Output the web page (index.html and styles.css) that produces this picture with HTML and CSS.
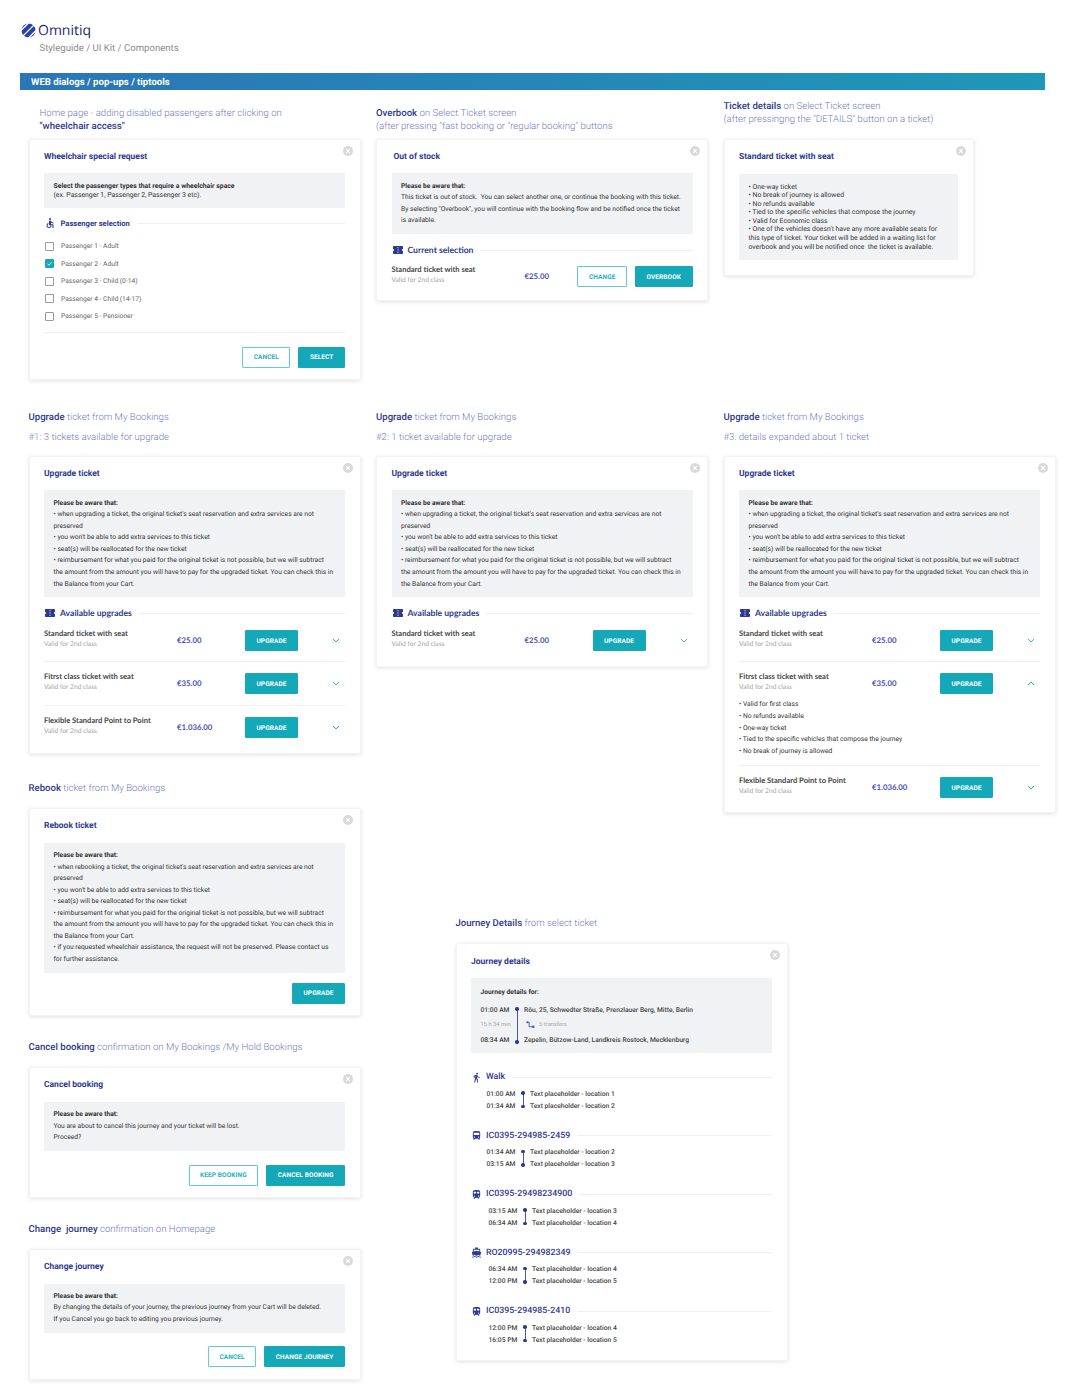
FILE: index.html
```html
<!DOCTYPE html>
<html lang="en">
<head>
    <meta charset="UTF-8">
    <meta name="viewport" content="width=device-width, initial-scale=1.0">
    <title>Omnitiq - Styleguide</title>
    <link rel="stylesheet" href="styles.css">
</head>
<body>
    <svg class="sprite" aria-hidden="true">
        <symbol id="i-close" viewBox="0 0 10 10"><circle cx="5" cy="5" r="5" fill="#d9d9d9"/><path d="M3.2 3.2l3.6 3.6M6.8 3.2L3.2 6.8" stroke="#fff" stroke-width="1.1"/></symbol>
        <symbol id="i-ticket" viewBox="2 4 20 16"><path d="M22 10V6c0-1.11-.9-2-2-2H4c-1.1 0-1.99.89-1.99 2v4c1.1 0 1.99.9 1.99 2s-.89 2-2 2v4c0 1.1.9 2 2 2h16c1.1 0 2-.9 2-2v-4c-1.1 0-2-.9-2-2s.9-2 2-2zm-9 7.5h-2v-2h2v2zm0-4.5h-2v-2h2v2zm0-4.5h-2v-2h2v2z"/></symbol>
        <symbol id="i-wheelchair" viewBox="0 0 24 24"><path d="M12 2a2 2 0 1 0 0 4 2 2 0 0 0 0-4zM19 13v-2c-1.54.02-3.09-.75-4.07-1.83l-1.29-1.43c-.17-.19-.38-.34-.61-.45-.01 0-.01-.01-.02-.01H13c-.35-.2-.75-.3-1.19-.26C10.76 7.11 10 8.04 10 9.09V15c0 1.1.9 2 2 2h5v5h2v-5.5c0-1.1-.9-2-2-2h-3v-3.45c1.29 1.07 3.25 1.94 5 1.95zm-6.17 5c-.41 1.16-1.52 2-2.83 2-1.66 0-3-1.34-3-3 0-1.31.84-2.41 2-2.83V12.1c-2.28.46-4 2.48-4 4.9 0 2.76 2.24 5 5 5 2.42 0 4.44-1.72 4.9-4h-2.07z"/></symbol>
        <symbol id="i-walk" viewBox="0 0 24 24"><path d="M13.5 5.5c1.1 0 2-.9 2-2s-.9-2-2-2-2 .9-2 2 .9 2 2 2zM9.8 8.9L7 23h2.1l1.8-8 2.1 2v6h2v-7.5l-2.1-2 .6-3C14.8 12 16.8 13 19 13v-2c-1.9 0-3.5-1-4.3-2.4l-1-1.6c-.4-.6-1-1-1.7-1-.3 0-.5.1-.8.1L6 8.3V13h2V9.6l1.8-.7"/></symbol>
        <symbol id="i-bus" viewBox="0 0 24 24"><path d="M4 16c0 .88.39 1.67 1 2.22V20c0 .55.45 1 1 1h1c.55 0 1-.45 1-1v-1h8v1c0 .55.45 1 1 1h1c.55 0 1-.45 1-1v-1.78c.61-.55 1-1.34 1-2.22V6c0-3.5-3.58-4-8-4s-8 .5-8 4v10zm3.5 1c-.83 0-1.5-.67-1.5-1.5S6.67 14 7.5 14s1.5.67 1.5 1.5S8.33 17 7.5 17zm9 0c-.83 0-1.5-.67-1.5-1.5s.67-1.5 1.5-1.5 1.5.67 1.5 1.5-.67 1.5-1.5 1.5zm1.5-6H6V6h12v5z"/></symbol>
        <symbol id="i-train" viewBox="0 0 24 24"><path d="M12 2c-4 0-8 .5-8 4v9.5C4 17.43 5.57 19 7.5 19L6 20.5v.5h2.23l2-2H14l2 2h2v-.5L16.5 19c1.93 0 3.5-1.57 3.5-3.5V6c0-3.5-3.58-4-8-4zM7.5 17c-.83 0-1.5-.67-1.5-1.5S6.67 14 7.5 14s1.5.67 1.5 1.5S8.33 17 7.5 17zm3.5-7H6V6h5v4zm2 0V6h5v4h-5zm3.5 7c-.83 0-1.5-.67-1.5-1.5s.67-1.5 1.5-1.5 1.5.67 1.5 1.5-.67 1.5-1.5 1.5z"/></symbol>
        <symbol id="i-ferry" viewBox="0 0 24 24"><path d="M20 21c-1.39 0-2.78-.47-4-1.32-2.44 1.71-5.56 1.71-8 0C6.78 20.53 5.39 21 4 21H2v2h2c1.38 0 2.74-.35 4-.99 2.52 1.29 5.48 1.29 8 0 1.26.65 2.62.99 4 .99h2v-2h-2zM3.95 19H4c1.6 0 3.02-.88 4-2 .98 1.12 2.4 2 4 2s3.02-.88 4-2c.98 1.12 2.4 2 4 2h.05l1.89-6.68c.08-.26.06-.54-.06-.78s-.34-.42-.6-.5L20 10.62V6c0-1.1-.9-2-2-2h-3V1H9v3H6c-1.1 0-2 .9-2 2v4.62l-1.29.42c-.26.08-.48.26-.6.5s-.15.52-.06.78L3.95 19zM6 6h12v3.97L12 8 6 9.97V6z"/></symbol>
        <symbol id="i-chevron" viewBox="0 0 8 5"><path d="M1 1l3 3 3-3" fill="none" stroke="#2fb6c4" stroke-width="1"/></symbol>
    </svg>

    <header class="page-head">
        <div class="logo">
            <svg class="logo-mark" viewBox="0 0 16 16">
                <circle cx="8" cy="8" r="7.5" fill="#2a3fb0"/>
                <path d="M-1 9L9-1M2 14L14 2M7 17L17 7" stroke="#fff" stroke-width="1.5"/>
            </svg>
            <span class="logo-name">Omnitiq</span>
        </div>
        <p class="crumbs">Styleguide / UI Kit / Components</p>
    </header>

    <div class="band">WEB dialogs / pop-ups / tiptools</div>

    <main class="board">
        <!-- first row -->
        <section class="board-col">
            <h2 class="label label-indent">Home page - adding disabled passengers after clicking on<br><b>"wheelchair access"</b></h2>
            <div class="dialog">
                <svg class="close"><use href="#i-close"/></svg>
                <h3 class="dialog-title">Wheelchair special request</h3>
                <div class="notice notice-tight">
                    <b>Select the passenger types that require a wheelchair space</b><br>
                    (ex. Passenger 1, Passenger 2, Passenger 3 etc).
                </div>
                <div class="sect-head">
                    <svg class="sect-icon"><use href="#i-wheelchair"/></svg>
                    <span>Passenger selection</span>
                </div>
                <ul class="pax-list">
                    <li><span class="check"></span>Passenger 1 - Adult</li>
                    <li><span class="check is-on"><svg viewBox="0 0 10 10"><path d="M2 5.2l2.2 2.2L8 3" fill="none" stroke="#fff" stroke-width="1.1"/></svg></span>Passenger 2 - Adult</li>
                    <li><span class="check"></span>Passenger 3 - Child (0-14)</li>
                    <li><span class="check"></span>Passenger 4 - Child (14-17)</li>
                    <li><span class="check"></span>Passenger 5 - Pensioner</li>
                </ul>
                <div class="actions actions-ruled">
                    <button class="btn btn-line">CANCEL</button>
                    <button class="btn">SELECT</button>
                </div>
            </div>
        </section>

        <section class="board-col">
            <h2 class="label"><b>Overbook</b> on Select Ticket screen<br>(after pressing "fast booking or "regular booking" buttons</h2>
            <div class="dialog">
                <svg class="close"><use href="#i-close"/></svg>
                <h3 class="dialog-title title-shift">Out of stock</h3>
                <div class="notice">
                    <b>Please be aware that:</b><br>
                    This ticket is out of stock.&nbsp; You can select another one, or continue the booking with this ticket.<br>
                    By selecting "Overbook", you will continue with the booking flow and be notified once the ticket<br>
                    is available.
                </div>
                <div class="sect-head sect-head-lg">
                    <svg class="sect-icon ticket"><use href="#i-ticket"/></svg>
                    <span>Current selection</span>
                </div>
                <div class="ticket-row ticket-only">
                    <div class="ticket-main">
                        <div class="ticket-info">
                            <div class="ticket-name">Standard ticket with seat</div>
                            <div class="ticket-sub">Valid for 2nd class</div>
                        </div>
                        <div class="ticket-price">€25.00</div>
                        <div class="ticket-btns">
                            <button class="btn btn-line">CHANGE</button>
                            <button class="btn">OVERBOOK</button>
                        </div>
                    </div>
                </div>
            </div>
        </section>

        <section class="board-col">
            <h2 class="label label-high"><b>Ticket details</b> on Select Ticket screen<br>(after pressingng the "DETAILS" button on a ticket)</h2>
            <div class="dialog dialog-small">
                <svg class="close"><use href="#i-close"/></svg>
                <h3 class="dialog-title">Standard ticket with seat</h3>
                <div class="notice notice-tight">
                    • One-way ticket<br>
                    • No break of journey is allowed<br>
                    • No refunds available<br>
                    • Tied to the specific vehicles that compose the journey<br>
                    • Valid for Economic class<br>
                    • One of the vehicles doesn't have any more available seats for<br>
                    this type of ticket. Your ticket will be added in a waiting list for<br>
                    overbook and you will be notified once&nbsp; the ticket is available.
                </div>
            </div>
        </section>

        <!-- second row -->
        <section class="board-col">
            <h2 class="label label-double"><b>Upgrade</b> ticket from My Bookings<br>#1: 3 tickets available for upgrade</h2>
            <div class="dialog">
                <svg class="close"><use href="#i-close"/></svg>
                <h3 class="dialog-title">Upgrade ticket</h3>
                <div class="notice">
                    <b>Please be aware that:</b><br>
                    • when upgrading a ticket, the original ticket's seat reservation and extra services are not<br>
                    preserved<br>
                    • you won't be able to add extra services to this ticket<br>
                    • seat(s) will be reallocated for the new ticket<br>
                    • reimbursement for what you paid for the original ticket is not possible, but we will subtract<br>
                    the amount from the amount you will have to pay for the upgraded ticket. You can check this in<br>
                    the Balance from your Cart.
                </div>
                <div class="sect-head sect-head-lg">
                    <svg class="sect-icon ticket"><use href="#i-ticket"/></svg>
                    <span>Available upgrades</span>
                </div>
                <div class="ticket-row">
                    <div class="ticket-main">
                        <div class="ticket-info">
                            <div class="ticket-name">Standard ticket with seat</div>
                            <div class="ticket-sub">Valid for 2nd class</div>
                        </div>
                        <div class="ticket-price">€25.00</div>
                        <button class="btn btn-upgrade">UPGRADE</button>
                        <svg class="chevron"><use href="#i-chevron"/></svg>
                    </div>
                </div>
                <div class="ticket-row">
                    <div class="ticket-main">
                        <div class="ticket-info">
                            <div class="ticket-name">Fitrst class ticket with seat</div>
                            <div class="ticket-sub">Valid for 2nd class</div>
                        </div>
                        <div class="ticket-price">€35.00</div>
                        <button class="btn btn-upgrade">UPGRADE</button>
                        <svg class="chevron"><use href="#i-chevron"/></svg>
                    </div>
                </div>
                <div class="ticket-row">
                    <div class="ticket-main">
                        <div class="ticket-info">
                            <div class="ticket-name">Flexible Standard Point to Point</div>
                            <div class="ticket-sub">Valid for 2nd class</div>
                        </div>
                        <div class="ticket-price">€1.036.00</div>
                        <button class="btn btn-upgrade">UPGRADE</button>
                        <svg class="chevron"><use href="#i-chevron"/></svg>
                    </div>
                </div>
            </div>

            <h2 class="label label-next label-rebook"><b>Rebook</b> ticket from My Bookings</h2>
            <div class="dialog">
                <svg class="close"><use href="#i-close"/></svg>
                <h3 class="dialog-title">Rebook ticket</h3>
                <div class="notice">
                    <b>Please be aware that:</b><br>
                    • when rebooking a ticket, the original ticket's seat reservation and extra services are not<br>
                    preserved<br>
                    • you won't be able to add extra services to this ticket<br>
                    • seat(s) will be reallocated for the new ticket<br>
                    • reimbursement for what you paid for the original ticket is not possible, but we will subtract<br>
                    the amount from the amount you will have to pay for the upgraded ticket. You can check this in<br>
                    the Balance from your Cart.<br>
                    • if you requested wheelchair assistance, the request will not be preserved. Please contact us<br>
                    for further assistance.
                </div>
                <div class="actions actions-near">
                    <button class="btn btn-upgrade">UPGRADE</button>
                </div>
            </div>

            <h2 class="label label-next"><b>Cancel booking</b> confirmation on My Bookings /My Hold Bookings</h2>
            <div class="dialog">
                <svg class="close"><use href="#i-close"/></svg>
                <h3 class="dialog-title">Cancel booking</h3>
                <div class="notice">
                    <b>Please be aware that:</b><br>
                    You are about to cancel this journey and your ticket will be lost.<br>
                    Proceed?
                </div>
                <div class="actions">
                    <button class="btn btn-line">KEEP BOOKING</button>
                    <button class="btn">CANCEL BOOKING</button>
                </div>
            </div>

            <h2 class="label label-next"><b>Change&nbsp; journey</b> confirmation on Homepage</h2>
            <div class="dialog">
                <svg class="close"><use href="#i-close"/></svg>
                <h3 class="dialog-title">Change journey</h3>
                <div class="notice">
                    <b>Please be aware that:</b><br>
                    By changing the details of your journey, the previous journey from your Cart will be deleted.<br>
                    If you Cancel you go back to editing you previous journey.
                </div>
                <div class="actions">
                    <button class="btn btn-line">CANCEL</button>
                    <button class="btn">CHANGE JOURNEY</button>
                </div>
            </div>
        </section>

        <section class="board-col">
            <h2 class="label label-double"><b>Upgrade</b> ticket from My Bookings<br>#2: 1 ticket available for upgrade</h2>
            <div class="dialog">
                <svg class="close"><use href="#i-close"/></svg>
                <h3 class="dialog-title">Upgrade ticket</h3>
                <div class="notice">
                    <b>Please be aware that:</b><br>
                    • when upgrading a ticket, the original ticket's seat reservation and extra services are not<br>
                    preserved<br>
                    • you won't be able to add extra services to this ticket<br>
                    • seat(s) will be reallocated for the new ticket<br>
                    • reimbursement for what you paid for the original ticket is not possible, but we will subtract<br>
                    the amount from the amount you will have to pay for the upgraded ticket. You can check this in<br>
                    the Balance from your Cart.
                </div>
                <div class="sect-head sect-head-lg">
                    <svg class="sect-icon ticket"><use href="#i-ticket"/></svg>
                    <span>Available upgrades</span>
                </div>
                <div class="ticket-row">
                    <div class="ticket-main">
                        <div class="ticket-info">
                            <div class="ticket-name">Standard ticket with seat</div>
                            <div class="ticket-sub">Valid for 2nd class</div>
                        </div>
                        <div class="ticket-price">€25.00</div>
                        <button class="btn btn-upgrade">UPGRADE</button>
                        <svg class="chevron"><use href="#i-chevron"/></svg>
                    </div>
                </div>
            </div>

            <div class="journey-wrap">
                <h2 class="label"><b>Journey Details</b> from select ticket</h2>
                <div class="dialog dialog-journey">
                    <svg class="close"><use href="#i-close"/></svg>
                    <h3 class="dialog-title">Journey details</h3>
                    <div class="notice journey-box">
                        <b>Journey details for:</b>
                        <div class="route route-summary">
                            <span class="time">01:00 AM</span>
                            <span class="rail"></span>
                            <span class="place">Röu, 25, Schwedter Straße, Prenzlauer Berg, Mitte, Berlin</span>
                            <span class="time time-muted">15 h 34 min</span>
                            <span class="place place-muted">
                                <svg class="transfer" viewBox="0 0 10 10"><path d="M1 2.5h2.5v5H8" fill="none" stroke="#4a55b8" stroke-width="1"/><circle cx="1.5" cy="2.5" r="1.2" fill="#4a55b8"/><circle cx="8" cy="7.5" r="1.4" fill="#4a55b8"/></svg>
                                5 transfers
                            </span>
                            <span class="time">08:34 AM</span>
                            <span class="place">Zepelin, Bützow-Land, Landkreis Rostock, Mecklenburg</span>
                        </div>
                    </div>

                    <div class="leg">
                        <div class="sect-head leg-head">
                            <svg class="sect-icon"><use href="#i-walk"/></svg>
                            <span>Walk</span>
                        </div>
                        <div class="route">
                            <span class="time">01:00 AM</span>
                            <span class="rail"></span>
                            <span class="place">Text placeholder - location 1</span>
                            <span class="time">01:34 AM</span>
                            <span class="place">Text placeholder - location 2</span>
                        </div>
                    </div>
                    <div class="leg">
                        <div class="sect-head leg-head">
                            <svg class="sect-icon"><use href="#i-bus"/></svg>
                            <span>IC0395-294985-2459</span>
                        </div>
                        <div class="route">
                            <span class="time">01:34 AM</span>
                            <span class="rail"></span>
                            <span class="place">Text placeholder - location 2</span>
                            <span class="time">03:15 AM</span>
                            <span class="place">Text placeholder - location 3</span>
                        </div>
                    </div>
                    <div class="leg">
                        <div class="sect-head leg-head">
                            <svg class="sect-icon"><use href="#i-train"/></svg>
                            <span>IC0395-29498234900</span>
                        </div>
                        <div class="route route-shift">
                            <span class="time">03:15 AM</span>
                            <span class="rail"></span>
                            <span class="place">Text placeholder - location 3</span>
                            <span class="time">06:34 AM</span>
                            <span class="place">Text placeholder - location 4</span>
                        </div>
                    </div>
                    <div class="leg">
                        <div class="sect-head leg-head">
                            <svg class="sect-icon"><use href="#i-ferry"/></svg>
                            <span>RO20995-294982349</span>
                        </div>
                        <div class="route route-shift">
                            <span class="time">06:34 AM</span>
                            <span class="rail"></span>
                            <span class="place">Text placeholder - location 4</span>
                            <span class="time">12:00 PM</span>
                            <span class="place">Text placeholder - location 5</span>
                        </div>
                    </div>
                    <div class="leg">
                        <div class="sect-head leg-head">
                            <svg class="sect-icon"><use href="#i-train"/></svg>
                            <span>IC0395-294985-2410</span>
                        </div>
                        <div class="route route-shift">
                            <span class="time">12:00 PM</span>
                            <span class="rail"></span>
                            <span class="place">Text placeholder - location 4</span>
                            <span class="time">16:05 PM</span>
                            <span class="place">Text placeholder - location 5</span>
                        </div>
                    </div>
                </div>
            </div>
        </section>

        <section class="board-col">
            <h2 class="label label-double"><b>Upgrade</b> ticket from My Bookings<br>#3: details expanded about 1 ticket</h2>
            <div class="dialog">
                <svg class="close"><use href="#i-close"/></svg>
                <h3 class="dialog-title">Upgrade ticket</h3>
                <div class="notice">
                    <b>Please be aware that:</b><br>
                    • when upgrading a ticket, the original ticket's seat reservation and extra services are not<br>
                    preserved<br>
                    • you won't be able to add extra services to this ticket<br>
                    • seat(s) will be reallocated for the new ticket<br>
                    • reimbursement for what you paid for the original ticket is not possible, but we will subtract<br>
                    the amount from the amount you will have to pay for the upgraded ticket. You can check this in<br>
                    the Balance from your Cart.
                </div>
                <div class="sect-head sect-head-lg">
                    <svg class="sect-icon ticket"><use href="#i-ticket"/></svg>
                    <span>Available upgrades</span>
                </div>
                <div class="ticket-row">
                    <div class="ticket-main">
                        <div class="ticket-info">
                            <div class="ticket-name">Standard ticket with seat</div>
                            <div class="ticket-sub">Valid for 2nd class</div>
                        </div>
                        <div class="ticket-price">€25.00</div>
                        <button class="btn btn-upgrade">UPGRADE</button>
                        <svg class="chevron"><use href="#i-chevron"/></svg>
                    </div>
                </div>
                <div class="ticket-row is-open">
                    <div class="ticket-main">
                        <div class="ticket-info">
                            <div class="ticket-name">Fitrst class ticket with seat</div>
                            <div class="ticket-sub">Valid for 2nd class</div>
                        </div>
                        <div class="ticket-price">€35.00</div>
                        <button class="btn btn-upgrade">UPGRADE</button>
                        <svg class="chevron chevron-up"><use href="#i-chevron"/></svg>
                    </div>
                    <div class="ticket-details">
                        • Valid for first class<br>
                        • No refunds available<br>
                        • One-way ticket<br>
                        • Tied to the specific vehicles that compose the journey<br>
                        • No break of journey is allowed
                    </div>
                </div>
                <div class="ticket-row">
                    <div class="ticket-main">
                        <div class="ticket-info">
                            <div class="ticket-name">Flexible Standard Point to Point</div>
                            <div class="ticket-sub">Valid for 2nd class</div>
                        </div>
                        <div class="ticket-price">€1.036.00</div>
                        <button class="btn btn-upgrade">UPGRADE</button>
                        <svg class="chevron"><use href="#i-chevron"/></svg>
                    </div>
                </div>
            </div>
        </section>
    </main>
</body>
</html>
```

FILE: styles.css
```css
:root {
    --navy: #2e3a8f;
    --label: #727cc2;
    --price: #4a55b8;
    --teal: #14a8b8;
    --teal-line: #62cbd7;
    --grey-box: #f1f2f4;
    --rule: #efefef;
    --text: #333;
    --muted: #a5a5a5;
}

* {
    box-sizing: border-box;
    margin: 0;
    padding: 0;
}

body {
    background: white;
    color: var(--text);
    font-family: Roboto, "Liberation Sans", sans-serif;
    font-size: 6.7px;
    text-rendering: geometricPrecision;
    overflow-x: hidden;
}

.sprite {
    display: none;
}

/* page header */
.page-head {
    height: 73px;
    padding: 22px 0 0 21px;
}

.logo {
    display: flex;
    align-items: center;
    gap: 2px;
    height: 17px;
}

.logo-mark {
    width: 15px;
    height: 15px;
}

.logo-name {
    font-family: "Open Sans", Roboto, sans-serif;
    font-size: 14px;
    line-height: 17px;
    color: #1c2a6e;
}

.crumbs {
    margin: 4px 0 0 18.5px;
    font-size: 9.6px;
    line-height: 12px;
    color: #8b8b8b;
}

.band {
    margin: 0 25px 0 20px;
    height: 17px;
    padding-left: 11px;
    background: linear-gradient(90deg, #2b76b6 0%, #1e97b8 100%);
    color: white;
    font-size: 9.6px;
    font-weight: 700;
    line-height: 19px;
}

/* board */
.board {
    display: grid;
    grid-template-columns: repeat(3, 332px);
    column-gap: 15.5px;
    align-items: start;
    padding: 10px 0 15px 28.5px;
}

.board-col {
    min-width: 0;
}

.label {
    font-size: 9.6px;
    font-weight: 300;
    line-height: 12.5px;
    color: var(--label);
    margin-bottom: 12.5px;
}

.label b {
    font-weight: 500;
    color: var(--navy);
}

.board-col:nth-child(-n+3) {
    padding-top: 6.75px;
}

.board-col:nth-child(-n+3) .label {
    line-height: 13px;
    margin-bottom: 6px;
}

.label-indent {
    padding-left: 11px;
}

.board-col:nth-child(3) {
    padding-top: 0;
}

.board-col:nth-child(3) .label-high {
    margin-bottom: 13px;
}

.board-col:nth-child(n+4) {
    margin-top: 28px;
}

.label-double {
    line-height: 20px;
    margin-bottom: 7.5px;
}

.label-next {
    margin-top: 26.1px;
}

.label-rebook {
    margin-top: 28.75px;
}

.journey-wrap {
    width: 332px;
    margin: 250.25px 0 0 79.5px;
}

/* dialog */
.dialog {
    position: relative;
    padding: 12px 14.5px 15px;
    background: white;
    border: 1px solid #f3f3f3;
    border-radius: 2px;
    box-shadow: 0 1px 4px rgba(0, 0, 0, 0.12);
}

.dialog-small {
    width: 250px;
}

.dialog-journey {
    padding-top: 13px;
}

.close {
    position: absolute;
    top: 6px;
    right: 7px;
    width: 10px;
    height: 10px;
}

.dialog-title {
    font-size: 8.5px;
    font-weight: 700;
    line-height: 10px;
    color: var(--navy);
    margin-bottom: 11.5px;
}

.title-shift {
    padding-left: 2px;
}

.notice {
    padding: 7.3px 9.5px;
    background: var(--grey-box);
    border-radius: 1px;
    line-height: 11.55px;
    white-space: nowrap;
}

.notice b {
    font-weight: 700;
}

.notice-tight {
    padding: 9px 9.5px;
    font-size: 6.85px;
    line-height: 8.6px;
}

/* section heads */
.sect-head {
    display: flex;
    align-items: center;
    margin-top: 10px;
    height: 10px;
    font-size: 7.6px;
    font-weight: 700;
    color: var(--navy);
}

.sect-head::after {
    content: "";
    flex: 1;
    height: 1px;
    margin-left: 7px;
    background: var(--rule);
}

.sect-head-lg {
    margin-top: 11px;
    font-family: Lato, Roboto, sans-serif;
    font-size: 8.6px;
}

.sect-icon {
    flex: none;
    width: 12px;
    height: 12px;
    margin-right: 4.5px;
    fill: var(--navy);
}

.sect-icon.ticket {
    width: 10px;
    height: 8px;
    margin: 0 5px 0 1px;
}

/* passenger list */
.pax-list {
    list-style: none;
    margin-top: 9px;
    padding-left: 1px;
    color: #666;
}

.pax-list li {
    display: flex;
    align-items: center;
    gap: 7px;
    height: 17.5px;
}

.check {
    width: 9px;
    height: 9px;
    border: 1px solid #9a9a9a;
    border-radius: 1px;
}

.check.is-on {
    background: var(--teal);
    border-color: var(--teal);
}

.check svg {
    display: block;
    width: 100%;
    height: 100%;
}

/* buttons */
.actions {
    display: flex;
    justify-content: flex-end;
    gap: 8px;
    margin: 13.5px 0 -3.5px;
}

.actions-near {
    margin-top: 10px;
}

.actions-ruled {
    margin-top: 7px;
    padding-top: 14px;
    border-top: 1px solid var(--rule);
}

.btn {
    height: 21px;
    padding: 0 10.5px;
    background: var(--teal);
    border: 1px solid var(--teal);
    border-radius: 1px;
    color: white;
    font-family: inherit;
    font-size: 6.5px;
    font-weight: 700;
    letter-spacing: 0.1px;
    text-rendering: geometricPrecision;
}

.btn-line {
    background: white;
    border-color: var(--teal-line);
    color: #1fb0bf;
}

.btn-upgrade {
    flex: none;
    width: 53px;
    padding: 0;
}

/* ticket rows */
.ticket-row {
    padding: 11px 0;
    border-bottom: 1px solid var(--rule);
}

.sect-head + .ticket-row {
    margin-top: 1px;
    padding-bottom: 10px;
}

.ticket-row:last-child {
    padding-bottom: 0;
    border-bottom: 0;
}

.sect-head + .ticket-only {
    margin: 0 0 -2px;
    padding-bottom: 0;
}

.ticket-main {
    display: flex;
    align-items: flex-start;
}

.ticket-info {
    flex: none;
    width: 133px;
    margin-top: -2.5px;
}

.ticket-name {
    font-family: Lato, Roboto, sans-serif;
    font-size: 7.6px;
    font-weight: 700;
    line-height: 11px;
    color: #444;
    white-space: nowrap;
}

.ticket-sub {
    font-family: Lato, Roboto, sans-serif;
    font-size: 6.7px;
    line-height: 10px;
    color: var(--muted);
}

.ticket-price {
    flex: none;
    width: 68px;
    font-family: Lato, Roboto, sans-serif;
    font-size: 7.8px;
    font-weight: 700;
    line-height: 21px;
    color: var(--price);
}

.ticket-only .ticket-price {
    width: auto;
}

.ticket-btns {
    display: flex;
    gap: 8px;
    margin-left: auto;
}

.chevron {
    width: 8px;
    height: 5px;
    margin: 8px 5px 0 auto;
}

.chevron-up {
    transform: rotate(180deg);
}

.is-open {
    padding-bottom: 8px;
}

.is-open + .ticket-row {
    margin-bottom: -1.5px;
}

.ticket-details {
    margin-top: 5px;
    line-height: 11.6px;
}

/* journey */
.journey-box {
    padding: 10px 9.5px 8px;
    height: 75px;
    line-height: 9px;
}

.leg {
    margin-bottom: 19px;
}

.leg:last-child {
    margin-bottom: -1px;
}

.journey-box + .leg {
    margin-top: 19px;
}

.leg-head {
    margin-top: 0;
    font-size: 8.8px;
    font-weight: 500;
}

.leg-head .sect-icon {
    width: 11px;
    height: 11px;
    margin-right: 4px;
}

.route {
    display: grid;
    grid-template-columns: 33px 10.5px auto;
    grid-auto-rows: 12px;
    align-items: center;
    margin: 5.5px 0 0 15.5px;
    font-size: 6.7px;
    font-weight: 500;
    color: #444;
    white-space: nowrap;
}

.route-shift {
    margin-left: 17.5px;
}

.route-summary {
    grid-auto-rows: 15px;
    margin: 5.5px 0 0;
}

.time {
    grid-column: 1;
}

.place {
    grid-column: 3;
}

.rail {
    grid-column: 2;
    grid-row: 1 / span 2;
    position: relative;
    justify-self: start;
    align-self: stretch;
    width: 1px;
    margin: 5.5px 0 5px 3px;
    background: var(--price);
}

.route-summary .rail {
    grid-row: 1 / span 3;
    margin: 6.5px 0 5.5px 3px;
}

.rail::before,
.rail::after {
    content: "";
    position: absolute;
    left: -1.25px;
    width: 3.5px;
    height: 3.5px;
    border-radius: 50%;
    background: var(--navy);
}

.rail::before {
    top: -1.75px;
}

.rail::after {
    bottom: -1.75px;
}

.time-muted,
.place-muted {
    color: var(--muted);
    font-weight: 400;
    font-size: 5.8px;
}

.transfer {
    width: 9px;
    height: 9px;
    margin: 0 2.5px 0 2px;
    vertical-align: middle;
}
```
